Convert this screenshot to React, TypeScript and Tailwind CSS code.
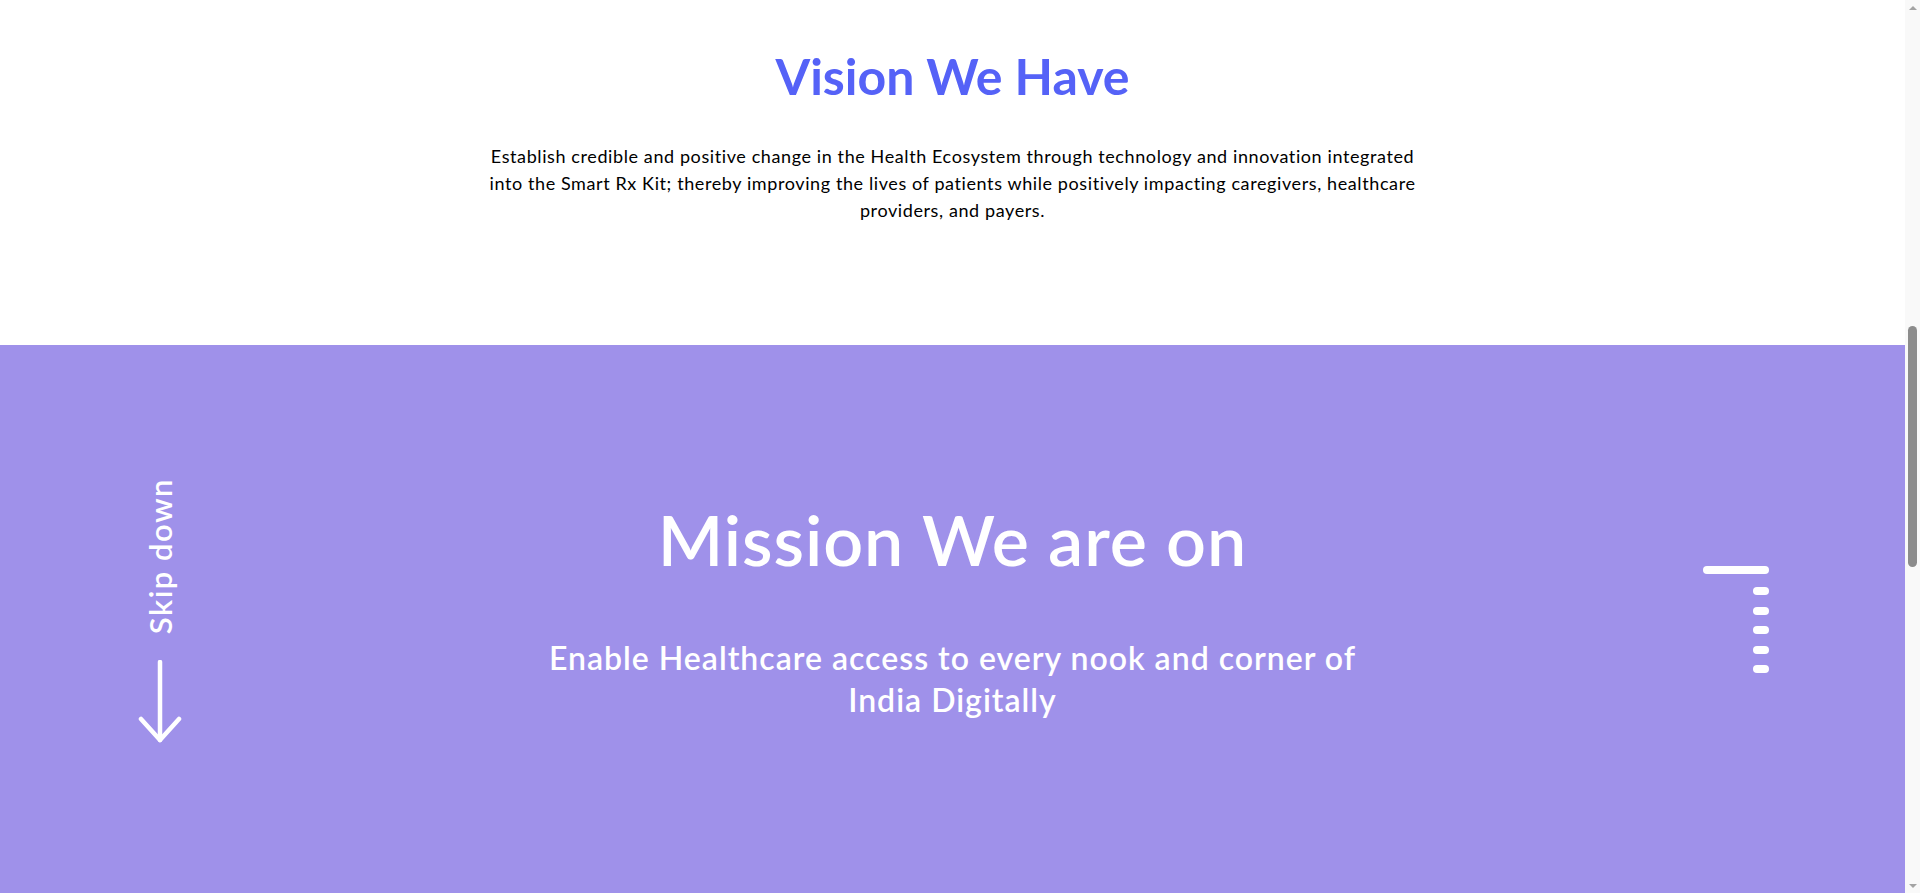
import React from "react";

/**
 * Vision / Mission block — white intro with the vision statement,
 * followed by the purple mission banner with "Skip down" and a slide indicator.
 */

function ArrowDown() {
  return (
    <svg width="44" height="84" viewBox="0 0 44 84" fill="none">
      <path d="M22 2 V80" stroke="white" strokeWidth="4.5" strokeLinecap="round" />
      <path
        d="M3 59 L22 80 L41 59"
        stroke="white"
        strokeWidth="4.5"
        strokeLinecap="round"
        strokeLinejoin="round"
      />
    </svg>
  );
}

function SlideIndicator() {
  return (
    <div className="flex flex-col items-end">
      <div className="h-[8px] w-[66px] rounded-full bg-white" />
      <div className="mt-[13px] flex flex-col gap-[11.5px]">
        {[0, 1, 2, 3, 4].map((i) => (
          <div key={i} className="h-[8px] w-[16px] rounded-full bg-white" />
        ))}
      </div>
    </div>
  );
}

function FakeScrollbar() {
  return (
    <div className="flex h-full w-[15px] shrink-0 flex-col bg-[#f9f9f9]">
      <div className="flex h-[15px] items-center justify-center">
        <div className="h-0 w-0 border-x-[4px] border-b-[4px] border-x-transparent border-b-[#a3a3a3]" />
      </div>
      <div className="flex-1">
        <div className="mx-auto mt-[311px] h-[241px] w-[9px] rounded-full bg-[#8c8c8c]" />
      </div>
      <div className="flex h-[15px] items-center justify-center">
        <div className="h-0 w-0 border-x-[4px] border-t-[4px] border-x-transparent border-t-[#a3a3a3]" />
      </div>
    </div>
  );
}

export default function App() {
  return (
    <div className="flex h-screen w-full overflow-hidden bg-white font-['Lato',sans-serif]">
      <div className="flex min-w-0 flex-1 flex-col">
        {/* Vision */}
        <section className="flex h-[345px] shrink-0 flex-col items-center pt-[46px]">
          <h1 className="text-[50px] font-bold leading-[1.2] text-[#5562f7]">Vision We Have</h1>
          <p className="mt-[37px] max-w-[935px] text-center text-[18px] leading-[27px] tracking-[0.6px] text-black">
            Establish credible and positive change in the Health Ecosystem through technology and
            innovation integrated into the Smart Rx Kit; thereby improving the lives of patients while
            positively impacting caregivers, healthcare providers, and payers.
          </p>
        </section>

        {/* Mission */}
        <section className="grid flex-1 grid-cols-[200px_1fr_200px] bg-[#9f91ea] text-white">
          <div className="flex flex-col items-center pl-[120px] pt-[133px]">
            <span className="rotate-180 text-[31px] font-semibold leading-none tracking-[1.5px] [writing-mode:vertical-rl]">
              Skip down
            </span>
            <div className="mt-[26px]">
              <ArrowDown />
            </div>
          </div>

          <div className="flex flex-col items-center pt-[152px] text-center">
            <h2 className="text-[70px] font-semibold leading-[1.2] tracking-[0.9px]">Mission We are on</h2>
            <p className="mt-[56px] max-w-[845px] text-[32px] font-semibold leading-[42px] tracking-[1px]">
              Enable Healthcare access to every nook and corner of India Digitally
            </p>
          </div>

          <div className="flex flex-col items-end pr-[136px] pt-[221px]">
            <SlideIndicator />
          </div>
        </section>
      </div>

      <FakeScrollbar />
    </div>
  );
}
